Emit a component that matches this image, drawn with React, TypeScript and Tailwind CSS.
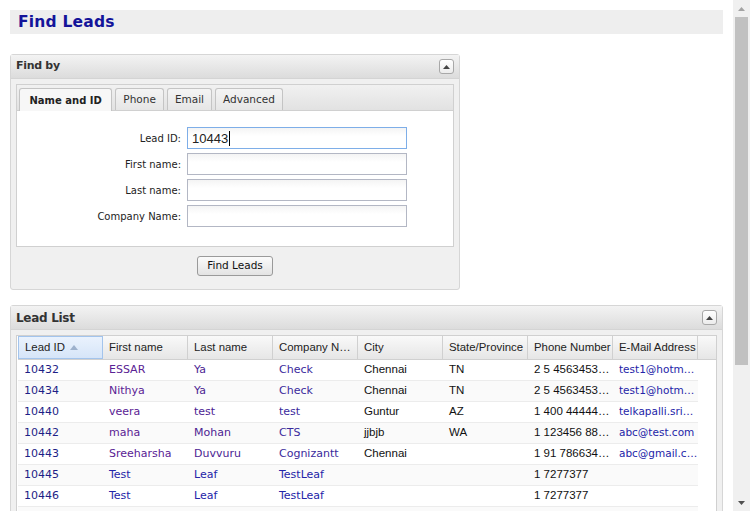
import React from "react";

type Row = {
  id: string;
  first: string;
  last: string;
  company: string;
  city: string;
  state: string;
  phone: string;
  email: string;
  visited: boolean;
};

const rows: Row[] = [
  { id: "10432", first: "ESSAR", last: "Ya", company: "Check", city: "Chennai", state: "TN", phone: "2 5 4563453…", email: "test1@hotm…", visited: true },
  { id: "10434", first: "Nithya", last: "Ya", company: "Check", city: "Chennai", state: "TN", phone: "2 5 4563453…", email: "test1@hotm…", visited: true },
  { id: "10440", first: "veera", last: "test", company: "test", city: "Guntur", state: "AZ", phone: "1 400 44444…", email: "telkapalli.sri…", visited: true },
  { id: "10442", first: "maha", last: "Mohan", company: "CTS", city: "jjbjb", state: "WA", phone: "1 123456 88…", email: "abc@test.com", visited: true },
  { id: "10443", first: "Sreeharsha", last: "Duvvuru", company: "Cognizantt", city: "Chennai", state: "", phone: "1 91 786634…", email: "abc@gmail.c…", visited: true },
  { id: "10445", first: "Test", last: "Leaf", company: "TestLeaf", city: "", state: "", phone: "1 7277377", email: "", visited: false },
  { id: "10446", first: "Test", last: "Leaf", company: "TestLeaf", city: "", state: "", phone: "1 7277377", email: "", visited: false },
];

const verdana = "font-['DejaVu_Sans',Verdana,sans-serif]";
const arial = "font-['Liberation_Sans',Arial,sans-serif]";

const CollapseButton = () => (
  <button className="w-[15px] h-[15px] rounded-[3px] border border-[#a8a8a8] bg-gradient-to-b from-white to-[#ececec] flex items-center justify-center">
    <svg width="7" height="4" viewBox="0 0 7 4"><polygon points="0,4 3.5,0 7,4" fill="#444" /></svg>
  </button>
);

const PanelHeader = ({ title, size }: { title: string; size: string }) => (
  <div className="h-[24px] flex items-center justify-between pl-[5px] pr-[5px] bg-gradient-to-b from-[#f3f3f3] to-[#dcdcdc] border-b border-[#d4d4d4]">
    <span className={`${verdana} ${size} font-bold text-[#333] tracking-[-0.3px]`}>{title}</span>
    <CollapseButton />
  </div>
);

const fields = ["Lead ID:", "First name:", "Last name:", "Company Name:"];
const tabs = ["Name and ID", "Phone", "Email", "Advanced"];
const headers = ["Lead ID", "First name", "Last name", "Company N…", "City", "State/Province", "Phone Number", "E-Mail Address"];

export default function App() {
  return (
    <div className="flex h-[511px] w-[750px] overflow-hidden bg-white">
      <div className="flex-1 pt-[10px] pl-[10px] pr-[10px]">
        {/* title */}
        <div className="h-[24px] bg-[#eeeeee] flex items-center pl-[8px] pt-px">
          <h1 className={`${verdana} text-[15.5px] font-bold text-[#14149a] tracking-[0.2px]`}>Find Leads</h1>
        </div>

        {/* Find by panel */}
        <div className="mt-[20px] w-[450px] border border-[#d6d6d6] rounded-[3px] bg-[#f0f0f0]">
          <PanelHeader title="Find by" size="text-[11px]" />
          <div className="p-[5px]">
            <div className="border border-[#d0d0d0]">
              <div className="h-[26px] bg-gradient-to-b from-[#f1f1f1] to-[#e2e2e2] flex items-end pl-[2px] gap-[3px] border-b border-[#d0d0d0]">
                {tabs.map((t, i) => (
                  <div
                    key={t}
                    className={`flex items-center rounded-t-[3px] border border-b-0 border-[#c4c4c4] ${verdana} whitespace-nowrap ${
                      i === 0
                        ? "px-[9.5px] h-[23px] -mb-px bg-[#f7f7f7] font-bold text-[10px] text-[#222]"
                        : "px-[7px] h-[22px] bg-gradient-to-b from-[#f4f4f4] to-[#e6e6e6] text-[10.5px] text-[#333]"
                    }`}
                  >
                    {t}
                  </div>
                ))}
              </div>
              <div className="bg-white pt-[16px] pb-[19px] flex flex-col gap-[4px]">
                {fields.map((f, i) => (
                  <div key={f} className="flex items-center">
                    <div className={`w-[170px] text-right pr-[6px] ${verdana} text-[10px] text-[#222]`}>{f}</div>
                    <div
                      className={`w-[220px] h-[22px] border bg-gradient-to-b from-[#f4f4f4] to-white to-[40%] flex items-center pl-[4px] ${
                        i === 0 ? "border-[#7eaee8]" : "border-[#b3b7c4]"
                      }`}
                    >
                      {i === 0 && (
                        <span className={`${arial} text-[13px] text-[#222] border-r border-black pr-px leading-[15px]`}>10443</span>
                      )}
                    </div>
                  </div>
                ))}
              </div>
            </div>
            <div className="flex justify-center pt-[9px] pb-[8px]">
              <button className={`h-[20px] px-[9px] rounded-[3px] border border-[#9a9a9a] bg-gradient-to-b from-[#fbfbfb] to-[#e3e3e3] ${verdana} text-[10.5px] text-[#111]`}>
                Find Leads
              </button>
            </div>
          </div>
        </div>

        {/* Lead List panel */}
        <div className="mt-[15px] border border-[#d6d6d6] rounded-[3px] bg-[#f0f0f0]">
          <PanelHeader title="Lead List" size="text-[12px]" />
          <div className="px-[5px] pt-[5px]">
            <div className="border border-[#d0d0d0] bg-white pl-px">
              <div className="flex h-[24px] bg-gradient-to-b from-[#f9f9f9] to-[#e6e6e6] border-b border-[#d0d0d0]">
                {headers.map((h, i) => (
                  <div
                    key={h}
                    className={`w-[85px] shrink-0 flex items-center pl-[6px] ${arial} text-[11.4px] text-[#222] whitespace-nowrap overflow-hidden ${
                      i === 0 ? "bg-gradient-to-b from-[#eaf2fd] to-[#d6e5f8] border border-[#a3c4ec]" : "border-r border-[#d0d0d0]"
                    }`}
                  >
                    {h}
                    {i === 0 && (
                      <svg className="ml-[5px]" width="8" height="5" viewBox="0 0 8 5"><polygon points="0,5 4,0 8,5" fill="#9db1cc" /></svg>
                    )}
                  </div>
                ))}
                <div className="flex-1" />
              </div>
              {rows.map((r, i) => (
                <div key={r.id} className={`flex w-[680px] h-[21px] border-b border-[#ececec] ${i % 2 === 1 ? "bg-[#fafafa]" : "bg-white"}`}>
                  <div className={`w-[85px] shrink-0 pl-[6px] flex items-center ${verdana} text-[11px] text-[#1e1e86]`}>{r.id}</div>
                  <div className={`w-[85px] shrink-0 pl-[6px] flex items-center ${verdana} text-[11px] ${r.visited ? "text-[#5a2294]" : "text-[#2424a8]"}`}>{r.first}</div>
                  <div className={`w-[85px] shrink-0 pl-[6px] flex items-center ${verdana} text-[11px] ${r.visited ? "text-[#4c2392]" : "text-[#2424a8]"}`}>{r.last}</div>
                  <div className={`w-[85px] shrink-0 pl-[6px] flex items-center ${verdana} text-[11px] ${r.visited ? "text-[#3a2a9c]" : "text-[#2424a8]"}`}>{r.company}</div>
                  <div className={`w-[85px] shrink-0 pl-[6px] flex items-center ${arial} text-[11.5px] text-[#111]`}>{r.city}</div>
                  <div className={`w-[85px] shrink-0 pl-[6px] flex items-center ${arial} text-[11.5px] text-[#111]`}>{r.state}</div>
                  <div className={`w-[85px] shrink-0 pl-[6px] flex items-center ${arial} text-[11.5px] text-[#111] whitespace-nowrap`}>{r.phone}</div>
                  <div className={`w-[85px] shrink-0 pl-[6px] flex items-center ${verdana} text-[10.5px] text-[#2424a8] whitespace-nowrap overflow-hidden`}>{r.email}</div>
                </div>
              ))}
              <div className="w-[680px] h-[21px] bg-[#fafafa]" />
            </div>
          </div>
        </div>
      </div>

      {/* scrollbar */}
      <div className="w-[17px] bg-[#f0f0f0] flex flex-col items-center">
        <div className="h-[17px] flex items-center justify-center">
          <svg width="7" height="4" viewBox="0 0 7 4"><polygon points="0,4 3.5,0 7,4" fill="#a3a3a3" /></svg>
        </div>
        <div className="w-[13px] h-[348px] bg-[#c1c1c1]" />
        <div className="flex-1" />
        <div className="h-[17px] flex items-center justify-center">
          <svg width="7" height="4" viewBox="0 0 7 4"><polygon points="0,0 3.5,4 7,0" fill="#505050" /></svg>
        </div>
      </div>
    </div>
  );
}
